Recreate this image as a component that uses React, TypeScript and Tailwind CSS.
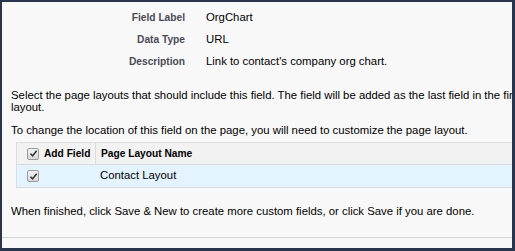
import React from "react";

function Check() {
  return (
    <span className="inline-flex h-[12px] w-[12px] items-center justify-center rounded-[2px] border border-[#9a9a9a] bg-gradient-to-b from-[#f4f4f4] to-[#d8d8d8]">
      <svg width="9" height="9" viewBox="0 0 9 9">
        <path d="M1.5 4.8 L3.6 6.9 L7.6 1.8" fill="none" stroke="#333" strokeWidth="1.6" />
      </svg>
    </span>
  );
}

export default function App() {
  const rows: [string, string][] = [
    ["Field Label", "OrgChart"],
    ["Data Type", "URL"],
    ["Description", "Link to contact's company org chart."],
  ];
  return (
    <div
      className="h-[251px] w-[515px] bg-[#29344d] pl-[2px] pt-[2px] pr-[3px] pb-[3px]"
      style={{ fontFamily: '"Liberation Sans", Arial, sans-serif' }}
    >
      <div className="flex h-full w-full flex-col overflow-hidden bg-[#f8f8f8] text-[11.35px] text-[#000]">
        <div className="pt-[5px]">
          {rows.map(([l, v]) => (
            <div key={l} className="flex h-[22px] items-center">
              <div className="w-[183px] shrink-0 text-right text-[10.2px] font-bold text-[#4a4a56]">{l}</div>
              <div className="pl-[21px] whitespace-nowrap">{v}</div>
            </div>
          ))}
        </div>
        <div className="mt-[16px] pl-[9px] leading-[12px]">
          <div className="whitespace-nowrap">
            Select the page layouts that should include this field. The field will be added as the last field in the first section of the page
          </div>
          <div>layout.</div>
        </div>
        <div className="mt-[11px] whitespace-nowrap pl-[9px] leading-[12px]">
          To change the location of this field on the page, you will need to customize the page layout.
        </div>
        <div className="ml-[14px] mt-[6px] w-[600px] shrink-0 border-t border-l border-b border-[#dcdcdc]">
          <div className="flex h-[22px] items-center border-b border-[#dcdcdc] bg-[#f2f2f2] text-[10.2px] font-bold">
            <div className="flex h-full w-[79px] items-center gap-[5px] border-r border-[#dcdcdc] pl-[10px]">
              <Check />
              <span>Add Field</span>
            </div>
            <div className="pl-[5px]">Page Layout Name</div>
          </div>
          <div className="flex h-[22px] items-center bg-[#e3f3ff]">
            <div className="flex w-[79px] items-center pl-[10px]">
              <Check />
            </div>
            <div className="pl-[4px]">Contact Layout</div>
          </div>
        </div>
        <div className="mt-[17px] whitespace-nowrap pl-[9px] leading-[12px]">
          When finished, click Save &amp; New to create more custom fields, or click Save if you are done.
        </div>
        <div className="mt-[20px] border-t border-[#d4d4d4]" />
      </div>
    </div>
  );
}
